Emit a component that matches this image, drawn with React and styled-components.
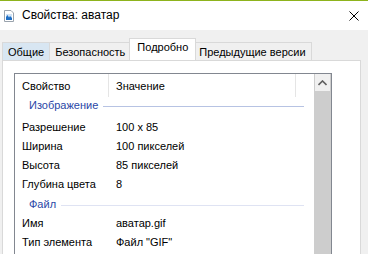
import React from 'react'
import styled, { createGlobalStyle } from 'styled-components'

const GlobalStyle = createGlobalStyle`
   html, body {
      margin: 0;
      padding: 0;
      background: #f0f0f0;
   }
   body {
      font-family: 'Segoe UI', 'Liberation Sans', Arial, sans-serif;
      font-size: 11px;
      color: #000;
   }
`

const StyledWindow = styled.div`
   width: 368px;
   height: 254px;
   overflow: hidden;
   display: flex;
   flex-direction: column;
   background: #f0f0f0;
   border-top: 1px solid #8db31c;
   box-sizing: border-box;
`
const StyledTitleBar = styled.header`
   height: 29px;
   flex-shrink: 0;
   background: #fff;
   display: flex;
   align-items: center;
   padding-left: 4px;
   gap: 8px;
`
const StyledTitle = styled.span`
   flex: 1;
   font-size: 12px;
   padding-bottom: 1px;
`
const StyledClose = styled.div`
   width: 46px;
   height: 29px;
   display: flex;
   align-items: center;
   justify-content: center;
   margin-right: -9px;
`
const StyledTabs = styled.div`
   display: flex;
   align-items: flex-end;
   height: 30px;
   padding-left: 2px;
   flex-shrink: 0;
`
const StyledTab = styled.div`
   height: ${(p) => (p.$active ? '22px' : '18px')};
   box-sizing: border-box;
   padding: ${(p) => (p.$active ? '2px 7px 0' : '0 5px')};
   margin: ${(p) => (p.$active ? '0 -2px' : '0')};
   display: flex;
   align-items: ${(p) => (p.$active ? 'flex-start' : 'center')};
   border: 1px solid #d9d9d9;
   border-bottom: none;
   margin-left: ${(p) => (p.$first || p.$active ? '' : '-1px')};
   background: ${(p) => (p.$active ? '#fff' : p.$hover ? '#d8e6f2' : '#f0f0f0')};
   position: relative;
   z-index: ${(p) => (p.$active ? 2 : 1)};
   white-space: nowrap;
`
const StyledPanel = styled.section`
   margin: 0 7px 0 2px;
   flex: 1;
   background: #fff;
   border: 1px solid #d9d9d9;
   border-bottom: none;
   padding: 12px 28px 0 11px;
   display: flex;
`
const StyledList = styled.div`
   flex: 1;
   border: 1px solid #828790;
   border-bottom: none;
   display: flex;
`
const StyledRows = styled.div`
   flex: 1;
   display: flex;
   flex-direction: column;
`
const StyledHeader = styled.div`
   display: flex;
   height: 23px;
   align-items: center;
`
const StyledHeaderCell = styled.div`
   width: ${(p) => p.$width}px;
   height: 23px;
   box-sizing: border-box;
   padding-left: 7px;
   display: flex;
   align-items: center;
   border-right: 1px solid #e5e5e5;
`
const StyledGroup = styled.div`
   display: flex;
   align-items: center;
   height: 16px;
   margin-top: ${(p) => p.$top}px;
   margin-bottom: ${(p) => p.$bottom}px;
   padding-left: 14px;
   padding-right: 10px;
   color: #2a47a6;
   gap: 5px;
   &::after {
      content: '';
      flex: 1;
      height: 1px;
      margin-top: 2px;
      background: ${(p) => p.$line};
   }
`
const StyledRow = styled.div`
   display: grid;
   grid-template-columns: 94px 1fr;
   height: 19px;
   align-items: center;
   padding-left: 7px;
`
const StyledScrollbar = styled.div`
   width: 17px;
   background: #cdcdcd;
   display: flex;
   flex-direction: column;
`
const StyledArrow = styled.div`
   height: 17px;
   background: #f0f0f0;
   display: flex;
   align-items: center;
   justify-content: center;
   margin: 0 1px;
`

const FileIcon = () => (
   <svg width='10' height='12' viewBox='0 0 10 12'>
      <path d='M0.5 0.5 H7 L9.5 3 V11.5 H0.5 Z' fill='#fff' stroke='#9aa3ad' />
      <path d='M2 4 H8 V10 H2 Z' fill='#cfe3f7' />
      <path d='M2 10 L2 7 L3.5 5 L5 7.5 L6 6 L8 8 V10 Z' fill='#1f6fc5' />
   </svg>
)

const tabs = ['Общие', 'Безопасность', 'Подробно', 'Предыдущие версии']

const image = [
   ['Разрешение', '100 x 85'],
   ['Ширина', '100 пикселей'],
   ['Высота', '85 пикселей'],
   ['Глубина цвета', '8'],
]
const file = [
   ['Имя', 'аватар.gif'],
   ['Тип элемента', 'Файл "GIF"'],
]

const App = () => {
   return (
      <>
         <GlobalStyle />
         <StyledWindow>
            <StyledTitleBar>
               <FileIcon />
               <StyledTitle>Свойства: аватар</StyledTitle>
               <StyledClose>
                  <svg width='10' height='10' viewBox='0 0 10 10'>
                     <path d='M0.5 0.5 L9.5 9.5 M9.5 0.5 L0.5 9.5' stroke='#000' strokeWidth='1' />
                  </svg>
               </StyledClose>
            </StyledTitleBar>
            <StyledTabs>
               {tabs.map((t, i) => (
                  <StyledTab key={t} $first={i === 0} $hover={i === 0} $active={i === 2}>
                     {t}
                  </StyledTab>
               ))}
            </StyledTabs>
            <StyledPanel>
               <StyledList>
                  <StyledRows>
                     <StyledHeader>
                        <StyledHeaderCell $width={94}>Свойство</StyledHeaderCell>
                        <StyledHeaderCell $width={187}>Значение</StyledHeaderCell>
                     </StyledHeader>
                     <StyledGroup $top={0} $bottom={4} $line='#b7c3e3'>
                        Изображение
                     </StyledGroup>
                     {image.map(([k, v]) => (
                        <StyledRow key={k}>
                           <span>{k}</span>
                           <span>{v}</span>
                        </StyledRow>
                     ))}
                     <StyledGroup $top={3} $bottom={1} $line='#dfe3f3'>
                        Файл
                     </StyledGroup>
                     {file.map(([k, v]) => (
                        <StyledRow key={k}>
                           <span>{k}</span>
                           <span>{v}</span>
                        </StyledRow>
                     ))}
                  </StyledRows>
                  <StyledScrollbar>
                     <StyledArrow>
                        <svg width='9' height='6' viewBox='0 0 9 6'>
                           <path d='M0.5 5 L4.5 1 L8.5 5' fill='none' stroke='#606060' strokeWidth='1.6' />
                        </svg>
                     </StyledArrow>
                  </StyledScrollbar>
               </StyledList>
            </StyledPanel>
         </StyledWindow>
      </>
   )
}

export default App
